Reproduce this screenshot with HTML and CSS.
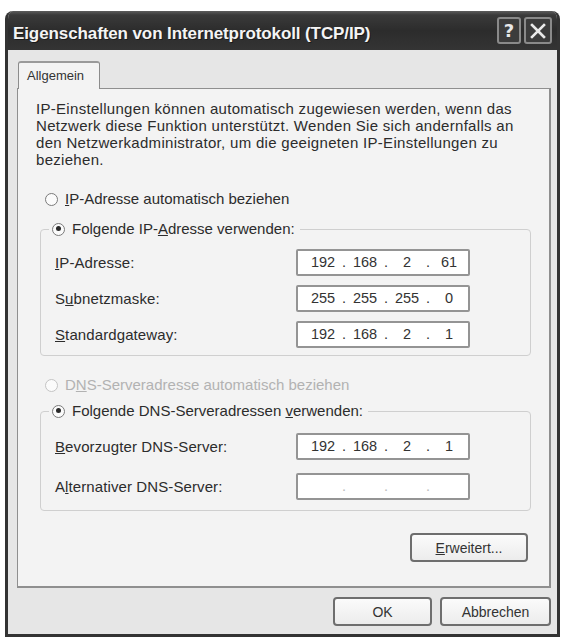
FILE: index.html
```html
<!DOCTYPE html>
<html lang="de">
<head>
<meta charset="utf-8">
<title>Eigenschaften von Internetprotokoll (TCP/IP)</title>
<link rel="stylesheet" href="styles.css">
</head>
<body>
<div class="window">
  <div class="titlebar">
    <span class="title">Eigenschaften von Internetprotokoll (TCP/IP)</span>
    <div class="tbuttons">
      <span class="tbtn">?</span>
      <span class="tbtn close">
        <svg width="18" height="18" viewBox="0 0 18 18"><path d="M3 3 L15 15 M15 3 L3 15" stroke="#e8e8e8" stroke-width="2.6" stroke-linecap="square"/></svg>
      </span>
    </div>
  </div>
  <div class="client">
    <div class="tabs"><span class="tab">Allgemein</span></div>
    <div class="panel">
      <p class="intro">IP-Einstellungen können automatisch zugewiesen werden, wenn das<br>Netzwerk diese Funktion unterstützt. Wenden Sie sich andernfalls an<br>den Netzwerkadministrator, um die geeigneten IP-Einstellungen zu<br>beziehen.</p>

      <div class="radio r-top"><span class="dot"></span><span><u>I</u>P-Adresse automatisch beziehen</span></div>

      <fieldset class="group g1">
        <legend class="radio"><span class="dot on"></span><span>Folgende IP-<u>A</u>dresse verwenden:</span></legend>
        <div class="row"><span class="lbl"><u>I</u>P-Adresse:</span><span class="ip"><span class="seg">192</span><span class="pt">.</span><span class="seg">168</span><span class="pt">.</span><span class="seg">2</span><span class="pt">.</span><span class="seg">61</span></span></div>
        <div class="row"><span class="lbl">S<u>u</u>bnetzmaske:</span><span class="ip"><span class="seg">255</span><span class="pt">.</span><span class="seg">255</span><span class="pt">.</span><span class="seg">255</span><span class="pt">.</span><span class="seg">0</span></span></div>
        <div class="row"><span class="lbl"><u>S</u>tandardgateway:</span><span class="ip"><span class="seg">192</span><span class="pt">.</span><span class="seg">168</span><span class="pt">.</span><span class="seg">2</span><span class="pt">.</span><span class="seg">1</span></span></div>
      </fieldset>

      <div class="radio r-dns disabled"><span class="dot"></span><span>D<u>N</u>S-Serveradresse automatisch beziehen</span></div>

      <fieldset class="group g2">
        <legend class="radio"><span class="dot on"></span><span>Folgende DNS-Serveradressen <u>v</u>erwenden:</span></legend>
        <div class="row"><span class="lbl"><u>B</u>evorzugter DNS-Server:</span><span class="ip"><span class="seg">192</span><span class="pt">.</span><span class="seg">168</span><span class="pt">.</span><span class="seg">2</span><span class="pt">.</span><span class="seg">1</span></span></div>
        <div class="row"><span class="lbl">A<u>l</u>ternativer DNS-Server:</span><span class="ip empty"><span class="seg"></span><span class="pt">.</span><span class="seg"></span><span class="pt">.</span><span class="seg"></span><span class="pt">.</span><span class="seg"></span></span></div>
      </fieldset>

      <div class="adv"><span class="btn btn-adv"><u>E</u>rweitert...</span></div>
    </div>
    <div class="footer">
      <span class="btn btn-ok">OK</span>
      <span class="btn btn-cancel">Abbrechen</span>
    </div>
  </div>
</div>
</body>
</html>
```

FILE: styles.css
```css
html, body {
  margin: 0;
  padding: 0;
  background: #ffffff;
}
body {
  font-family: "Liberation Sans", Arial, sans-serif;
  font-size: 15px;
  color: #2a2a2a;
}
u { text-decoration: underline; text-underline-offset: 1px; }

.window {
  margin: 11px 5px 0 5px;
  height: 626px;
  box-sizing: border-box;
  border: 3px solid #333333;
  border-top: none;
  border-radius: 8px 8px 0 0;
  background: #e6e6e6;
  display: flex;
  flex-direction: column;
  overflow: hidden;
}

.titlebar {
  height: 39px;
  flex: none;
  background: linear-gradient(#5c5c5c 0px, #3a3a3a 4px, #2c2c2c 50%, #343434 100%);
  display: flex;
  align-items: center;
  justify-content: space-between;
  padding: 0 8px 0 4px;
  margin: 0 -3px;
}
.title {
  color: #f4f4f4;
  font-family: "Liberation Sans", Arial, sans-serif;
  font-weight: bold;
  font-size: 17px;
  letter-spacing: -0.1px;
  padding: 7px 0 0 4px;
  text-shadow: 1px 1px 0 #1a1a1a;
}
.tbuttons {
  display: flex;
  gap: 3px;
}
.tbtn {
  width: 24px;
  height: 27px;
  box-sizing: border-box;
  border: 2px solid #8a8a8a;
  border-radius: 3px;
  background: #3c3c3c;
  color: #e8e8e8;
  font-family: "DejaVu Sans", sans-serif;
  font-weight: bold;
  font-size: 18px;
  display: flex;
  align-items: center;
  justify-content: center;
}
.tbtn.close { width: 28px; }

.client {
  flex: 1;
  display: flex;
  flex-direction: column;
  padding: 11px 6px 0 9px;
}
.tabs {
  display: flex;
  padding-left: 1px;
  position: relative;
  z-index: 1;
  margin-bottom: -1px;
}
.tab {
  width: 82px;
  height: 28px;
  box-sizing: border-box;
  border: 1px solid #8c8c8c;
  border-bottom: none;
  border-top: 2px solid #9a9a9a;
  border-radius: 3px 3px 0 0;
  background: #f3f3f3;
  font-size: 13px;
  padding: 5px 0 0 8px;
  color: #333;
}
.panel {
  height: 500px;
  box-sizing: border-box;
  border: 1px solid #8f8f8f;
  border-right-width: 2px;
  border-bottom-width: 2px;
  background: #f3f3f3;
  padding: 11px 19px 0 18px;
  display: flex;
  flex-direction: column;
}
.intro {
  margin: 0;
  font-size: 15px;
  line-height: 17px;
  color: #2c2c2c;
  letter-spacing: 0.3px;
  white-space: nowrap;
}

.radio {
  display: flex;
  align-items: center;
  gap: 7px;
  height: 18px;
  line-height: 18px;
  color: #2c2c2c;
}
.dot {
  width: 13px;
  height: 13px;
  box-sizing: border-box;
  border: 1.5px solid #7a7a7a;
  border-radius: 50%;
  background: #fbfbfb;
  position: relative;
  flex: none;
}
.dot.on::after {
  content: "";
  position: absolute;
  left: 2.5px;
  top: 2.5px;
  width: 5px;
  height: 5px;
  border-radius: 50%;
  background: #2a2a2a;
}
.r-top {
  margin: 22px 0 0 9px;
}
.disabled { color: #b2b2b2; }
.disabled .dot { border-color: #c4c4c4; }

.group {
  margin: 0 0 0 4px;
  width: 491px;
  box-sizing: border-box;
  border: 1px solid #cfcfcf;
  border-radius: 4px;
  padding: 0 0 0 14px;
  min-width: 0;
}
.group legend {
  padding: 0 5px 0 3px;
  margin-left: -6px;
}
.g1 {
  margin-top: 12px;
  height: 136px;
}
.g2 {
  margin-top: 8px;
  height: 109px;
}
.row {
  display: flex;
  align-items: center;
  justify-content: space-between;
  padding-right: 60px;
  color: #2c2c2c;
  letter-spacing: 0.1px;
}
.g1 .row { height: 36px; }
.g1 .row:first-of-type { margin-top: 6px; }
.g2 .row { height: 40px; }
.g2 .row:first-of-type { margin-top: 6px; }

.ip {
  width: 174px;
  height: 27px;
  box-sizing: border-box;
  border: 2px solid #949494;
  border-radius: 2px;
  background: #ffffff;
  display: flex;
  align-items: center;
  padding-left: 8px;
  font-size: 14.5px;
  color: #333;
  letter-spacing: 0;
}
.seg {
  width: 34px;
  text-align: center;
}
.pt { width: 8px; text-align: center; }
.empty .pt { color: #bbb; }

.r-dns { margin: 20px 0 0 9px; }

.adv {
  display: flex;
  justify-content: flex-end;
  padding-right: 2px;
  margin-top: 22px;
}
.btn {
  box-sizing: border-box;
  height: 29px;
  border: 2px solid #6e6e6e;
  border-radius: 4px;
  background: linear-gradient(#fbfbfb, #ececec);
  display: flex;
  align-items: center;
  justify-content: center;
  font-size: 14px;
  color: #333;
}
.btn-adv { width: 118px; }

.footer {
  display: flex;
  justify-content: flex-end;
  gap: 8px;
  margin-top: 9px;
}
.btn-ok { width: 99px; }
.btn-cancel { width: 111px; }
```
